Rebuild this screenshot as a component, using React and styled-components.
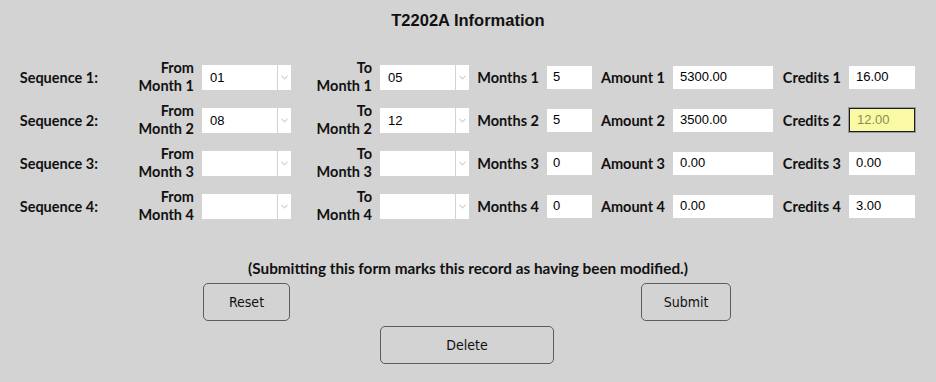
import React from "react";
import styled, { createGlobalStyle } from "styled-components";

const GlobalStyle = createGlobalStyle`
  html, body {
    margin: 0;
    padding: 0;
    background: #d3d3d3;
  }
  body {
    font-family: "Lato", "Noto Sans", sans-serif;
    color: #111;
  }
`;

const Page = styled.div`
  width: 936px;
  height: 382px;
  background: #d3d3d3;
  overflow: hidden;
`;

const Title = styled.h1`
  margin: 0;
  padding-top: 10px;
  text-align: center;
  font-family: "Liberation Sans", Arial, sans-serif;
  font-size: 16.5px;
  line-height: 20px;
  font-weight: 700;
  color: #111;
`;

const Grid = styled.div`
  margin-top: 29px;
  display: grid;
  grid-template-columns: 98px 88px 89px 73px 89px 62px 45px 65px 100px 60px 66px;
  column-gap: 8px;
  row-gap: 7px;
  align-items: center;
`;

const Label = styled.div`
  text-align: right;
  font-size: 14.5px;
  line-height: 18px;
  font-weight: 700;
  white-space: nowrap;
  padding-top: ${(p) => (p.$twoLine ? "0" : "1px")};
`;

const SelectBox = styled.div`
  display: flex;
  gap: 1px;
  height: 25px;
`;

const SelectValue = styled.div`
  flex: 1;
  background: #fff;
  font-family: "Liberation Sans", Arial, sans-serif;
  font-size: 13px;
  line-height: 25px;
  padding-left: 8px;
  color: #000;
`;

const ArrowBox = styled.div`
  width: 13px;
  background: #fff;
  display: flex;
  align-items: center;
  justify-content: center;
`;

const Field = styled.input`
  box-sizing: border-box;
  width: 100%;
  height: ${(p) => (p.$active ? "24px" : "23px")};
  margin: 0;
  padding: 0 0 2px ${(p) => p.$pad || 7}px;
  border: ${(p) => (p.$active ? "1px solid #1c1c28" : "none")};
  box-shadow: ${(p) => (p.$active ? "0 0 0 1px #9a9a9a" : "none")};
  background: ${(p) => (p.$active ? "#fafaa4" : "#fff")};
  color: ${(p) => (p.$active ? "#8c8c56" : "#000")};
  font-family: "Liberation Sans", Arial, sans-serif;
  font-size: 13px;
  outline: none;
`;

const Note = styled.div`
  margin-top: 35px;
  text-align: center;
  font-size: 15.3px;
  line-height: 18px;
  font-weight: 700;
`;

const ButtonArea = styled.div`
  width: 528px;
  margin: 6px 0 0 203px;
  display: flex;
  flex-direction: column;
  align-items: center;
  gap: 5px;
`;

const ButtonRow = styled.div`
  align-self: stretch;
  display: flex;
  justify-content: space-between;
`;

const Button = styled.button`
  box-sizing: border-box;
  width: ${(p) => p.$w}px;
  height: 38px;
  border: 1px solid #5c5c5c;
  border-radius: 5px;
  background: transparent;
  color: #111;
  font-family: "Liberation Sans Narrow", "DejaVu Sans Condensed", "Liberation Sans", sans-serif;
  font-size: 14px;
  font-weight: 500;
  cursor: pointer;
`;

const Chevron = () => (
  <svg width="7" height="5" viewBox="0 0 7 5">
    <path d="M0.5 1 L3.5 3.8 L6.5 1" fill="none" stroke="#b4b4b4" strokeWidth="1" />
  </svg>
);

const FakeSelect = ({ value }) => (
  <SelectBox>
    <SelectValue>{value}</SelectValue>
    <ArrowBox>
      <Chevron />
    </ArrowBox>
  </SelectBox>
);

const rows = [
  { n: 1, from: "01", to: "05", months: "5", amount: "5300.00", credits: "16.00" },
  { n: 2, from: "08", to: "12", months: "5", amount: "3500.00", credits: "12.00", active: true },
  { n: 3, from: "", to: "", months: "0", amount: "0.00", credits: "0.00" },
  { n: 4, from: "", to: "", months: "0", amount: "0.00", credits: "3.00" },
];

export default function App() {
  return (
    <Page>
      <GlobalStyle />
      <Title>T2202A Information</Title>
      <Grid>
        {rows.map((r) => (
          <React.Fragment key={r.n}>
            <Label>Sequence {r.n}:</Label>
            <Label $twoLine>
              From
              <br />
              Month {r.n}
            </Label>
            <FakeSelect value={r.from} />
            <Label $twoLine>
              To
              <br />
              Month {r.n}
            </Label>
            <FakeSelect value={r.to} />
            <Label>Months {r.n}</Label>
            <Field defaultValue={r.months} $pad={6} />
            <Label>Amount {r.n}</Label>
            <Field defaultValue={r.amount} />
            <Label>Credits {r.n}</Label>
            <Field defaultValue={r.credits} $active={r.active} />
          </React.Fragment>
        ))}
      </Grid>
      <Note>(Submitting this form marks this record as having been modified.)</Note>
      <ButtonArea>
        <ButtonRow>
          <Button $w={87}>Reset</Button>
          <Button $w={90}>Submit</Button>
        </ButtonRow>
        <Button $w={174}>Delete</Button>
      </ButtonArea>
    </Page>
  );
}
